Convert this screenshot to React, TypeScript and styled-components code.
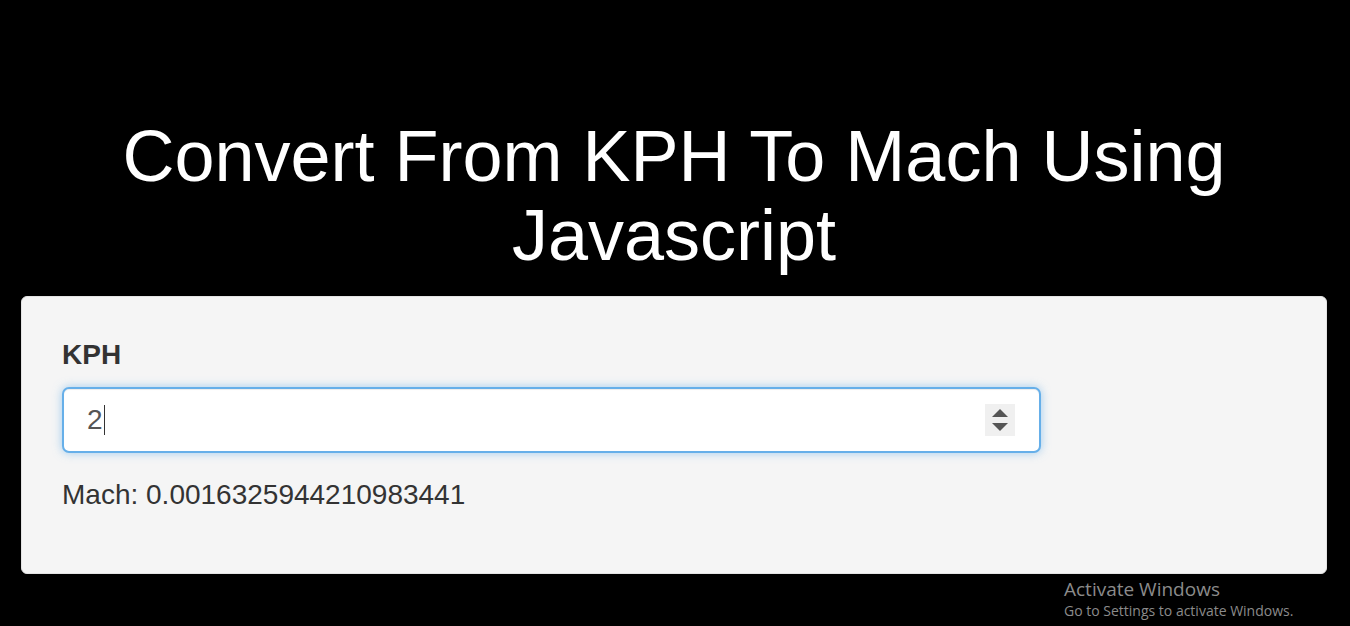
import React from 'react';
import styled, { createGlobalStyle } from 'styled-components';

const GlobalStyle = createGlobalStyle`
    html, body {
        margin: 0;
        padding: 0;
        background: #000;
        font-family: "Liberation Sans", Arial, sans-serif;
        overflow: hidden;
    }
`;

const Page = styled.div`
    position: relative;
    width: 1350px;
    height: 626px;
    padding: 0 23px 0 21px;
    box-sizing: border-box;
`;

const Title = styled.h1`
    margin: 0;
    padding-top: 117px;
    color: #fff;
    font-size: 72px;
    font-weight: 400;
    line-height: 79px;
    text-align: center;
`;

const Well = styled.div`
    margin-top: 21px;
    background: #f5f5f5;
    border: 1px solid #e3e3e3;
    border-radius: 6px;
    padding: 38px 40px 58px;
    box-sizing: border-box;
`;

const Label = styled.label`
    display: block;
    font-size: 28px;
    font-weight: 700;
    line-height: 40px;
    color: #333;
    margin-bottom: 12px;
`;

const Field = styled.div`
    display: flex;
    align-items: center;
    width: 80%;
    height: 66px;
    box-sizing: border-box;
    padding: 0 24px 0 23px;
    background: #fff;
    border: 2px solid #66afe9;
    border-radius: 7px;
    box-shadow: inset 0 1px 1px rgba(0, 0, 0, 0.075), 0 0 10px rgba(102, 175, 233, 0.6);
    font-size: 28px;
    color: #555;
`;

const Caret = styled.span`
    display: inline-block;
    width: 1px;
    height: 30px;
    margin-left: 1px;
    background: #333;
`;

const Spinner = styled.div`
    margin-left: auto;
    width: 30px;
    height: 32px;
    background: #f0f0f0;
    display: flex;
    flex-direction: column;
    align-items: center;
    justify-content: center;
    gap: 6px;
`;

const Result = styled.p`
    margin: 22px 0 0;
    font-size: 28px;
    line-height: 40px;
    color: #333;
`;

const Watermark = styled.div`
    position: absolute;
    left: 1064px;
    top: 577px;
    font-family: "Open Sans", "Noto Sans", sans-serif;
    color: #8b8b8b;
`;

const WatermarkTitle = styled.div`
    font-size: 19px;
    line-height: 24px;
`;

const WatermarkText = styled.div`
    font-size: 14px;
    line-height: 20px;
`;

const Arrow = ({ up }: { up?: boolean }) => (
    <svg width="16" height="8" viewBox="0 0 16 8">
        <path d={up ? 'M0 8 L8 0 L16 8 Z' : 'M0 0 L16 0 L8 8 Z'} fill="#555" />
    </svg>
);

const App = () => (
    <Page>
        <GlobalStyle />
        <Title>Convert From KPH To Mach Using Javascript</Title>
        <Well>
            <Label>KPH</Label>
            <Field>
                <span>2</span>
                <Caret />
                <Spinner>
                    <Arrow up />
                    <Arrow />
                </Spinner>
            </Field>
            <Result>Mach: 0.0016325944210983441</Result>
        </Well>
        <Watermark>
            <WatermarkTitle>Activate Windows</WatermarkTitle>
            <WatermarkText>Go to Settings to activate Windows.</WatermarkText>
        </Watermark>
    </Page>
);

export default App;
